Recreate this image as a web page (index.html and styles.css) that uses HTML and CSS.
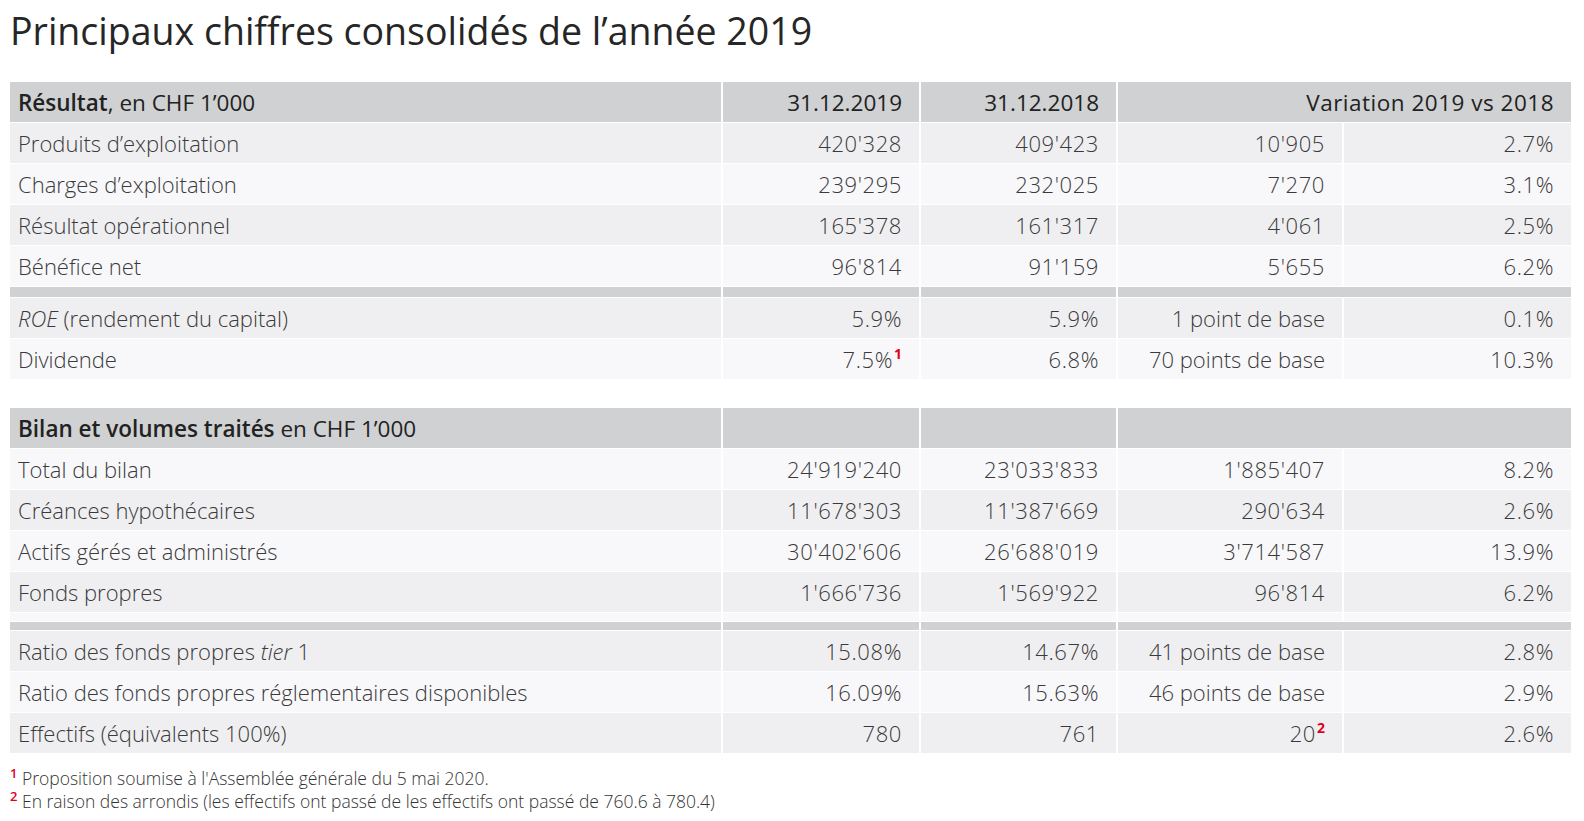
FILE: index.html
```html
<!DOCTYPE html>
<html lang="fr">
<head>
<meta charset="utf-8">
<title>Principaux chiffres consolidés de l'année 2019</title>
<link rel="stylesheet" href="styles.css">
</head>
<body>
<div class="page">
  <h1 class="title">Principaux chiffres consolidés de l’année 2019</h1>

  <table class="figures">
    <colgroup>
      <col class="c-label"><col class="c-num"><col class="c-num2"><col class="c-var"><col class="c-pct">
    </colgroup>
    <thead>
      <tr class="head">
        <th class="label"><b>Résultat</b>, en CHF 1’000</th>
        <th>31.12.2019</th>
        <th>31.12.2018</th>
        <th colspan="2" class="wide">Variation 2019 vs 2018</th>
      </tr>
    </thead>
    <tbody>
      <tr class="dark"><td class="label">Produits d’exploitation</td><td>420'328</td><td>409'423</td><td>10'905</td><td>2.7%</td></tr>
      <tr class="light"><td class="label">Charges d’exploitation</td><td>239'295</td><td>232'025</td><td>7'270</td><td>3.1%</td></tr>
      <tr class="dark"><td class="label">Résultat opérationnel</td><td>165'378</td><td>161'317</td><td>4'061</td><td>2.5%</td></tr>
      <tr class="light"><td class="label">Bénéfice net</td><td>96'814</td><td>91'159</td><td>5'655</td><td>6.2%</td></tr>
      <tr class="band"><td></td><td></td><td></td><td colspan="2"></td></tr>
      <tr class="dark"><td class="label"><i>ROE</i> (rendement du capital)</td><td>5.9%</td><td>5.9%</td><td class="txt">1 point de base</td><td>0.1%</td></tr>
      <tr class="light"><td class="label">Dividende</td><td>7.5%<sup class="note">1</sup></td><td>6.8%</td><td class="txt">70 points de base</td><td>10.3%</td></tr>
    </tbody>
  </table>

  <table class="figures second">
    <colgroup>
      <col class="c-label"><col class="c-num"><col class="c-num2"><col class="c-var"><col class="c-pct">
    </colgroup>
    <thead>
      <tr class="head">
        <th class="label"><b>Bilan et volumes traités</b> en CHF 1’000</th>
        <th></th>
        <th></th>
        <th colspan="2"></th>
      </tr>
    </thead>
    <tbody>
      <tr class="light"><td class="label">Total du bilan</td><td>24'919'240</td><td>23'033'833</td><td>1'885'407</td><td>8.2%</td></tr>
      <tr class="dark"><td class="label">Créances hypothécaires</td><td>11'678'303</td><td>11'387'669</td><td>290'634</td><td>2.6%</td></tr>
      <tr class="light"><td class="label">Actifs gérés et administrés</td><td>30'402'606</td><td>26'688'019</td><td>3'714'587</td><td>13.9%</td></tr>
      <tr class="dark"><td class="label">Fonds propres</td><td>1'666'736</td><td>1'569'922</td><td>96'814</td><td>6.2%</td></tr>
      <tr class="strip"><td></td><td></td><td></td><td></td><td></td></tr>
      <tr class="band thin"><td></td><td></td><td></td><td colspan="2"></td></tr>
      <tr class="dark"><td class="label">Ratio des fonds propres <i>tier</i> 1</td><td>15.08%</td><td>14.67%</td><td class="txt">41 points de base</td><td>2.8%</td></tr>
      <tr class="light"><td class="label">Ratio des fonds propres réglementaires disponibles</td><td>16.09%</td><td>15.63%</td><td class="txt">46 points de base</td><td>2.9%</td></tr>
      <tr class="dark"><td class="label">Effectifs (équivalents 100%)</td><td>780</td><td>761</td><td>20<sup class="note">2</sup></td><td>2.6%</td></tr>
    </tbody>
  </table>

  <div class="footnotes">
    <p><sup class="fn">1</sup> Proposition soumise à l'Assemblée générale du 5 mai 2020.</p>
    <p><sup class="fn">2</sup> En raison des arrondis (les effectifs ont passé de les effectifs ont passé de 760.6 à 780.4)</p>
  </div>
</div>
</body>
</html>
```

FILE: styles.css
```css
html, body {
  margin: 0;
  padding: 0;
  background: #ffffff;
}

body {
  font-family: "Open Sans", "Liberation Sans", sans-serif;
  color: #3a3a3a;
}

.page {
  padding: 8px 8px 0 8px;
}

.title {
  margin: 1px 0 0 2px;
  font-size: 37.5px;
  line-height: 44px;
  font-weight: 400;
  color: #262626;
  letter-spacing: 0;
}

.figures {
  margin-top: 28px;
  width: 1565px;
  border-collapse: separate;
  border-spacing: 2px 1px;
  table-layout: fixed;
  font-size: 22px;
}

.figures.second {
  margin-top: 27px;
}

.c-label { width: 711px; }
.c-num { width: 196px; }
.c-num2 { width: 195px; }
.c-var { width: 224px; }
.c-pct { width: 227px; }

.figures th,
.figures td {
  height: 40px;
  padding: 0 17px 0 8px;
  text-align: right;
  vertical-align: middle;
  white-space: nowrap;
  font-weight: 300;
}

.figures td {
  letter-spacing: 0.6px;
}

.figures td.label,
.figures td.txt {
  letter-spacing: 0;
}

.figures th.label,
.figures td.label {
  text-align: left;
}

.figures th {
  background: #d0d1d3;
  font-size: 22.5px;
  font-weight: 400;
  color: #222222;
}

.figures th.wide {
  letter-spacing: 0.5px;
}

.figures th b {
  font-weight: 600;
}

.figures i {
  font-style: italic;
}

.dark td { background: #efeff1; }
.light td { background: #f8f8fa; }

.band td {
  height: 10px;
  padding: 0;
  background: #d0d1d3;
}

.band.thin td {
  height: 8px;
}

.strip td {
  height: 8px;
  padding: 0;
  background: #f8f8fa;
}

.note {
  color: #e2001a;
  font-weight: 700;
  font-size: 14px;
  line-height: 0;
  letter-spacing: 0;
  vertical-align: 9px;
  margin-left: 1px;
}

.footnotes {
  margin-top: 13px;
  margin-left: 2px;
  font-size: 17.5px;
  line-height: 23px;
  font-weight: 300;
  color: #333333;
}

.footnotes p {
  margin: 0;
}

.fn {
  color: #e2001a;
  font-size: 13px;
  font-weight: 600;
  line-height: 0;
  vertical-align: 7px;
}
```
